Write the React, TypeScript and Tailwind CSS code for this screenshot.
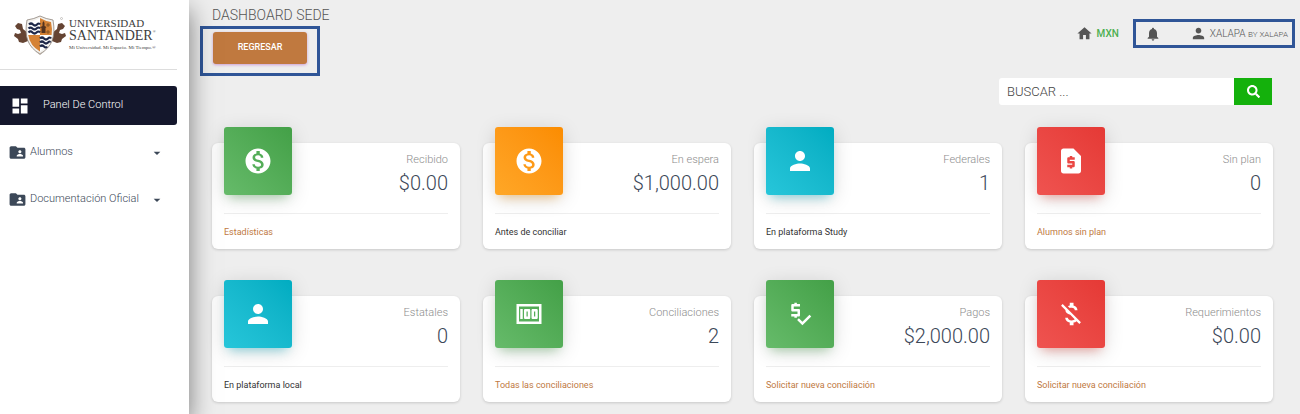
import type { ReactNode } from "react";
import type { IconType } from "react-icons";
import {
  MdArrowDropDown,
  MdDashboard,
  MdFolderShared,
  MdHome,
  MdMoney,
  MdMoneyOff,
  MdMonetizationOn,
  MdNotifications,
  MdPerson,
  MdPriceCheck,
  MdRequestPage,
} from "react-icons/md";
import { FaSearch } from "react-icons/fa";

const tones = {
  green: "bg-linear-to-tr from-[#66bb6a] to-[#43a047] shadow-[0_4px_20px_rgba(0,0,0,0.14),0_7px_10px_-5px_rgba(76,175,80,0.4)]",
  orange: "bg-linear-to-tr from-[#ffa726] to-[#fb8c00] shadow-[0_4px_20px_rgba(0,0,0,0.14),0_7px_10px_-5px_rgba(255,152,0,0.4)]",
  cyan: "bg-linear-to-tr from-[#26c6da] to-[#00acc1] shadow-[0_4px_20px_rgba(0,0,0,0.14),0_7px_10px_-5px_rgba(0,188,212,0.4)]",
  red: "bg-linear-to-tr from-[#ef5350] to-[#e53935] shadow-[0_4px_20px_rgba(0,0,0,0.14),0_7px_10px_-5px_rgba(244,67,54,0.4)]",
};

type Stat = {
  label: string;
  value: string;
  note: string;
  link?: boolean;
  tone: keyof typeof tones;
  icon: IconType;
};

const stats: Stat[] = [
  { label: "Recibido", value: "$0.00", note: "Estadísticas", link: true, tone: "green", icon: MdMonetizationOn },
  { label: "En espera", value: "$1,000.00", note: "Antes de conciliar", tone: "orange", icon: MdMonetizationOn },
  { label: "Federales", value: "1", note: "En plataforma Study", tone: "cyan", icon: MdPerson },
  { label: "Sin plan", value: "0", note: "Alumnos sin plan", link: true, tone: "red", icon: MdRequestPage },
  { label: "Estatales", value: "0", note: "En plataforma local", tone: "cyan", icon: MdPerson },
  { label: "Conciliaciones", value: "2", note: "Todas las conciliaciones", link: true, tone: "green", icon: MdMoney },
  { label: "Pagos", value: "$2,000.00", note: "Solicitar nueva conciliación", link: true, tone: "green", icon: MdPriceCheck },
  { label: "Requerimientos", value: "$0.00", note: "Solicitar nueva conciliación", link: true, tone: "red", icon: MdMoneyOff },
];

function StatCard({ label, value, note, link, tone, icon: Icon }: Stat) {
  return (
    <article className="rounded-md bg-white px-3 pb-[7px] shadow-[0_1px_3px_rgba(0,0,0,0.16)]">
      <div className="flex h-[71px] justify-between border-b border-[#eeeeee]">
        <div className={`-mt-4 flex size-[68px] shrink-0 items-center justify-center rounded-[3px] text-white ${tones[tone]}`}>
          <Icon size={30} />
        </div>
        <div className="pt-2 text-right">
          <p className="text-[11px] leading-[18px] font-light text-[#8c8c8c]">{label}</p>
          <h3 className="text-[20px] leading-7 font-light text-[#3c4858]">{value}</h3>
        </div>
      </div>
      <p className="pt-2 text-[9px] leading-5 text-[#333333]">
        {link ? <a href="#" className="text-[#c0793f]">{note}</a> : note}
      </p>
    </article>
  );
}

function Crest() {
  return (
    <svg viewBox="0 0 52 40" className="h-10 w-[52px] shrink-0" aria-hidden="true">
      <g fill="#654433">
        <path d="M14 18 9 14 8 9 4 8 1 11l2 3 3 1 1 3-3 1-3-1-1 3 4 3 1 3 4 1 5-2z" />
        <path d="m38 18 5-4 1-5 4-1 3 3-2 3-3 1-1 3 3 1 3-1 1 3-4 3-1 3-4 1-5-2z" />
      </g>
      <path d="M13 5Q20 4 26 1q6 3 13 4c3 17-1 27-13 34C14 32 10 22 13 5Z" fill="#f3f1ed" stroke="#8b8278" strokeWidth="0.8" />
      <path d="M15 7q6-1 11-4v17H14q-.6-6 1-13Z" fill="#fff" />
      <path d="M26 3q5 3 11 4 1.600 7 .6 13H26Z" fill="#d58235" />
      <path d="M14.200 20H26v16.500Q16 31 14.200 20Z" fill="#d58235" />
      <path d="M26 20h11.600Q36 31 26 36.500Z" fill="#fff" />
      <g fill="none" stroke="#1d2748" strokeWidth="2.200">
        <path d="M15 9.500q2-2 4 0t4 0 3 0M14.500 13.500q2-2 4 0t4 0 3.500 0M14.500 17.500q2-2 4 0t4 0 3.500 0" />
        <path d="M26 23.500q2-2 4 0t4 0 3 0M26 27.500q2-2 4 0t4 0 2 0M26 31.500q2-2 4 0t3 0" />
      </g>
      <path d="M27.500 18v-5l-1-1 2-1V8l1-2 1 2v3l2 1-1 1v5Z" fill="#54331f" />
      <path d="M34 8v4m-2-2h4m-2 5v4m-2-2h4" fill="none" stroke="#754922" strokeWidth="0.8" />
      <path d="M21 36q5 4 10 0l-5 4Z" fill="#b3aaa0" />
      <circle cx="47.500" cy="3.500" r="1" fill="none" stroke="#9b9590" strokeWidth="0.5" />
    </svg>
  );
}

function SubMenu({ children }: { children: ReactNode }) {
  return (
    <a href="#" className="flex h-[39px] items-center px-2 text-[11px] font-light text-[#3c4858]">
      <MdFolderShared size={19} className="mr-[3px] shrink-0" />
      <span className="grow">{children}</span>
      <MdArrowDropDown size={16} className="mr-1 shrink-0" />
    </a>
  );
}

export default function App() {
  return (
    <div className="flex min-h-screen bg-[#eeeeee] font-['Roboto',sans-serif] text-[#555555]">
      <aside className="z-10 w-[189px] shrink-0 bg-white pr-3 shadow-[0_10px_24px_rgba(0,0,0,0.5)]">
        <a href="#" className="flex h-[70px] items-center border-b border-[#dddddd] pl-[14px] font-['Liberation_Serif',serif] text-[#3d3d3d]">
          <Crest />
          <span className="ml-[3px] flex flex-col whitespace-nowrap">
            <span className="text-[11px] leading-3">UNIVERSIDAD</span>
            <span className="flex items-start text-[14px] leading-[14px]">
              SANTANDER<span className="text-[4px] leading-[6px]">®</span>
            </span>
            <span className="text-[5px] leading-[9px]">Mi Universidad. Mi Espacio. Mi Tiempo.®</span>
          </span>
        </a>
        <nav className="mt-4 flex flex-col gap-2">
          <a href="#" className="flex h-[39px] items-center rounded-r-[3px] bg-[#14172c] pl-[10px] text-[11px] font-light text-white">
            <MdDashboard size={20} className="mr-[13px] shrink-0" />
            Panel De Control
          </a>
          <SubMenu>Alumnos</SubMenu>
          <SubMenu>Documentación Oficial</SubMenu>
        </nav>
      </aside>

      <main className="min-w-0 grow pb-3">
        <header className="flex items-start justify-between pr-[5px] pl-[11px]">
          <div className="pt-[5px]">
            <h1 className="pl-3 text-[14px] leading-[21px] font-light">DASHBOARD SEDE</h1>
            <div className="w-fit border-3 border-[#2f5597] px-[10px] pt-[3px] pb-[9px]">
              <button type="button" className="h-8 w-[94px] rounded-[3px] bg-[#c0793f] text-[9px] font-medium text-white shadow-[0_1px_3px_rgba(156,39,176,0.4)]">
                REGRESAR
              </button>
            </div>
          </div>
          <div className="flex items-center pt-[19px]">
            <a href="#" className="mr-[14px] flex items-center gap-1 text-[10px] font-medium text-[#4caf50]">
              <MdHome size={17} className="text-[#555555]" />
              MXN
            </a>
            <div className="flex h-[29px] items-center border-3 border-[#2f5597] pr-1 pl-[9px]">
              <button type="button" aria-label="Notificaciones" className="mr-[29px]">
                <MdNotifications size={16} />
              </button>
              <a href="#" className="flex items-center gap-[3px] text-[10px] whitespace-nowrap">
                <MdPerson size={17} />
                <span className="font-light">XALAPA <small className="text-[8px]">BY XALAPA</small></span>
              </a>
            </div>
          </div>
        </header>

        <form className="mt-[2px] flex justify-end pr-7" onSubmit={(e) => e.preventDefault()}>
          <input
            type="search"
            aria-label="Buscar"
            placeholder="BUSCAR ..."
            className="h-[27px] w-[235px] rounded-l-[3px] bg-white px-2 text-[13px] font-light outline-none placeholder:text-[#444444]"
          />
          <button type="submit" aria-label="Buscar" className="flex h-[27px] w-[38px] items-center justify-center bg-[#14b10c] text-white">
            <FaSearch size={13} />
          </button>
        </form>

        <section className="mt-[38px] grid grid-cols-4 gap-x-[23px] gap-y-[47px] pr-[27px] pl-[23px]">
          {stats.map((s) => (
            <StatCard key={s.label} {...s} />
          ))}
        </section>
      </main>
    </div>
  );
}
